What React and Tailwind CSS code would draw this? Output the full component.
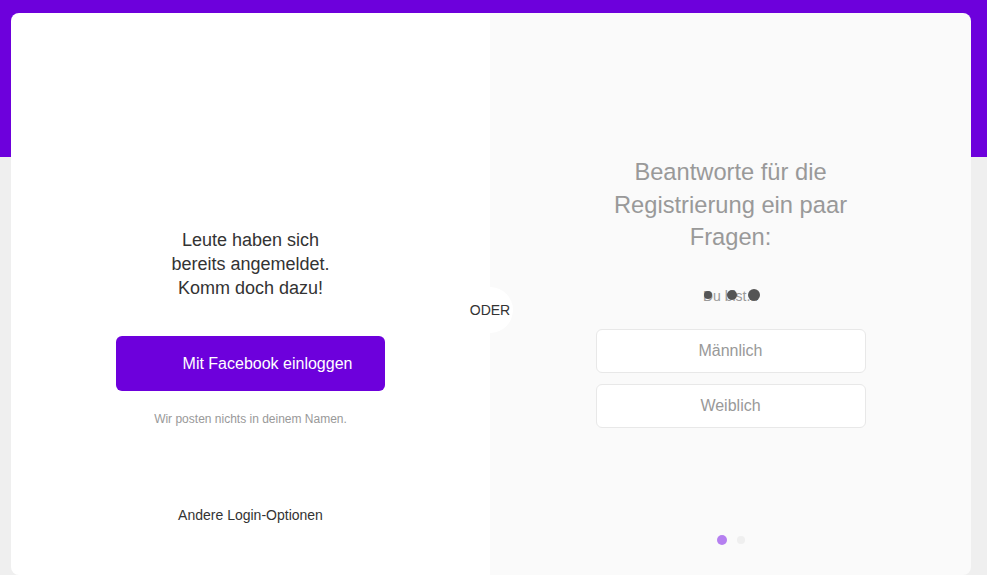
export default function App() {
  const font = { fontFamily: '"Liberation Sans", Arial, sans-serif' };
  return (
    <div
      className="h-[575px] w-full overflow-hidden bg-[linear-gradient(#6d00dc_157px,#efefef_157px)] pt-[13px] pl-[11px] pr-[16px]"
      style={font}
    >
      <div className="relative flex h-[562px] overflow-hidden rounded-lg">
        {/* Left */}
        <div className="flex w-[479px] flex-col items-center bg-white pt-[215px]">
          <p className="w-[200px] text-center text-[18px] leading-[24px] text-[#333]">
            Leute haben sich
            <br />
            bereits angemeldet.
            <br />
            Komm doch dazu!
          </p>
          <button className="mt-[36px] flex h-[55px] w-[269px] items-center justify-center rounded-md bg-[#6d00dc] pl-[34px] text-[16px] text-white">
            Mit Facebook einloggen
          </button>
          <p className="mt-[20px] text-[12px] leading-[16px] text-[#999]">
            Wir posten nichts in deinem Namen.
          </p>
          <p className="mt-[78px] text-[14px] leading-[20px] text-[#333]">
            Andere Login-Optionen
          </p>
        </div>

        {/* ODER circle */}
        <div className="absolute left-[456px] top-[274px] flex h-[46px] w-[46px] items-center justify-center rounded-full bg-white text-[14px] text-[#333]">
          ODER
        </div>

        {/* Right */}
        <div className="flex flex-1 flex-col items-center bg-[#fafafa] pt-[143px]">
          <h2 className="text-center text-[23.7px] leading-[32.5px] text-[#999]">
            Beantworte für die
            <br />
            Registrierung ein paar
            <br />
            Fragen:
          </h2>
          <div className="relative mt-[32px] text-[14px] leading-[20px] text-[#999]">
            Du bist...
            <span className="absolute left-[1px] top-[5px] h-[8px] w-[8px] rounded-full bg-[#555]" />
            <span className="absolute left-[24px] top-[4px] h-[10px] w-[10px] rounded-full bg-[#555]" />
            <span className="absolute left-[45px] top-[3px] h-[12px] w-[12px] rounded-full bg-[#555]" />
          </div>
          <div className="mt-[23px] flex flex-col gap-[11px]">
            <button className="h-[44px] w-[270px] rounded-md border border-[#e8e8e8] bg-white text-[16px] text-[#999]">
              Männlich
            </button>
            <button className="h-[44px] w-[270px] rounded-md border border-[#e8e8e8] bg-white text-[16px] text-[#999]">
              Weiblich
            </button>
          </div>
          <div className="mt-[107px] flex items-center gap-[10px]">
            <span className="h-[10px] w-[10px] rounded-full bg-[#b57ff0]" />
            <span className="h-[8px] w-[8px] rounded-full bg-[#efefef]" />
          </div>
        </div>
      </div>
    </div>
  );
}
